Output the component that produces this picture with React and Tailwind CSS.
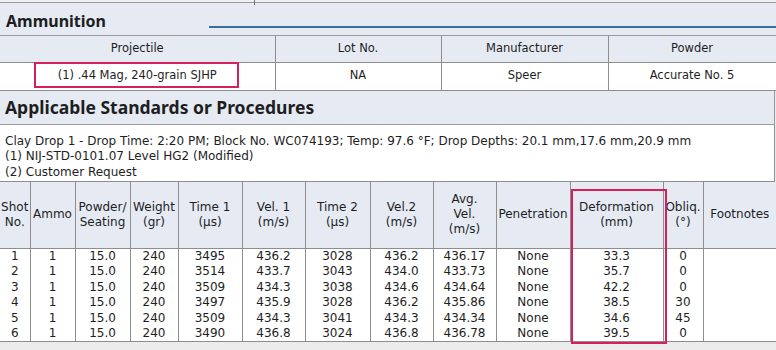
const ammo = [
  { head: "Projectile", w: "w-[275px]" },
  { head: "Lot No.", w: "w-[166px]" },
  { head: "Manufacturer", w: "w-[167px]" },
  { head: "Powder", w: "w-[168px]" },
];

const cols = [30, 45, 55, 48, 64, 63, 65, 63, 63, 74, 93, 40, 73];

const heads = [
  ["Shot", "No."],
  ["Ammo"],
  ["Powder/", "Seating"],
  ["Weight", "(gr)"],
  ["Time 1", "(µs)"],
  ["Vel. 1", "(m/s)"],
  ["Time 2", "(µs)"],
  ["Vel.2", "(m/s)"],
  ["Avg.", "Vel.", "(m/s)"],
  ["Penetration"],
  ["Deformation", "(mm)"],
  ["Obliq.", "(°)"],
  ["Footnotes"],
];

const rows = [
  ["1", "1", "15.0", "240", "3495", "436.2", "3028", "436.2", "436.17", "None", "33.3", "0", ""],
  ["2", "1", "15.0", "240", "3514", "433.7", "3043", "434.0", "433.73", "None", "35.7", "0", ""],
  ["3", "1", "15.0", "240", "3509", "434.3", "3038", "434.6", "434.64", "None", "42.2", "0", ""],
  ["4", "1", "15.0", "240", "3497", "435.9", "3028", "436.2", "435.86", "None", "38.5", "30", ""],
  ["5", "1", "15.0", "240", "3509", "434.3", "3041", "434.3", "434.34", "None", "34.6", "45", ""],
  ["6", "1", "15.0", "240", "3490", "436.8", "3024", "436.8", "436.78", "None", "39.5", "0", ""],
];

export default function App() {
  return (
    <div className="w-[776px] h-[350px] overflow-hidden bg-[#e5eaf3] text-[#1e1e1e] font-['DejaVu_Sans',sans-serif]">
      {/* top edge */}
      <div className="relative h-[3px] bg-[#eef0f3] border-b border-[#9a9a9a]">
        <div className="absolute left-[254px] top-0 w-px h-[5px] bg-[#777]" />
      </div>

      {/* Ammunition title */}
      <div className="h-[33px] flex border-b border-[#9a9a9a]">
        <div className="pl-[6px] pt-[9px] w-[209px] text-[16px] font-bold leading-[18px] font-['Noto_Sans',sans-serif]">
          Ammunition
        </div>
        <div className="flex-1 h-[2px] bg-[#3a6e9c] mt-[23px]" />
      </div>

      {/* Ammunition table */}
      <table className="table-fixed border-collapse w-[775px] text-[11.5px]">
        <thead>
          <tr className="h-[26px]">
            {ammo.map((c, i) => (
              <th
                key={c.head}
                className={`${c.w} font-normal border-b border-[#8e8e8e] ${i > 0 ? "border-l" : ""} ${i === 3 ? "border-r" : ""}`}
              >
                {c.head}
              </th>
            ))}
          </tr>
        </thead>
        <tbody>
          <tr className="h-[28px] bg-white">
            <td className="relative text-center border-b border-[#8e8e8e]">
              (1) .44 Mag, 240-grain SJHP
              <div className="absolute left-[34px] right-[36px] top-[-1px] bottom-[2px] border-2 border-[#d81e5b]" />
            </td>
            <td className="text-center border-b border-l border-[#8e8e8e]">NA</td>
            <td className="text-center border-b border-l border-[#8e8e8e]">Speer</td>
            <td className="text-center border-b border-l border-r border-[#8e8e8e]">Accurate No. 5</td>
          </tr>
        </tbody>
      </table>

      {/* Applicable standards */}
      <div className="h-[34px] w-[775px] flex items-center pl-[5px] text-[17.5px] font-bold border-b border-r border-[#9a9a9a] font-['Noto_Sans',sans-serif]">
        Applicable Standards or Procedures
      </div>
      <div className="h-[57px] w-[775px] bg-white border-r border-b border-[#8e8e8e] pl-[5px] pt-[9px] text-[12px] leading-[15.5px] whitespace-nowrap">
        <div>Clay Drop 1 - Drop Time: 2:20 PM; Block No. WC074193; Temp: 97.6 °F; Drop Depths: 20.1 mm,17.6 mm,20.9 mm</div>
        <div>(1) NIJ-STD-0101.07 Level HG2 (Modified)</div>
        <div>(2) Customer Request</div>
      </div>

      {/* Shot data */}
      <div className="relative">
        <table className="table-fixed border-collapse w-[776px] text-[12px] leading-[15px]">
          <colgroup>
            {cols.map((w, i) => (
              <col key={i} style={{ width: w }} />
            ))}
          </colgroup>
          <thead>
            <tr className="h-[67px]">
              {heads.map((h, i) => (
                <th
                  key={i}
                  className={`font-normal px-0 overflow-hidden whitespace-nowrap border-b border-[#8e8e8e] ${i > 0 ? "border-l" : ""}`}
                >
                  {h.map((l) => (
                    <div key={l}>{l}</div>
                  ))}
                </th>
              ))}
            </tr>
          </thead>
          <tbody className="bg-white">
            {rows.map((r, ri) => (
              <tr key={ri} className="h-[15.5px]">
                {r.map((v, ci) => (
                  <td
                    key={ci}
                    className={`text-center p-0 border-[#8e8e8e] ${ci > 0 ? "border-l" : ""} ${ri === rows.length - 1 ? "border-b" : ""}`}
                  >
                    {v}
                  </td>
                ))}
              </tr>
            ))}
          </tbody>
        </table>
        <div className="absolute left-[571px] top-[7px] w-[96px] h-[155px] border-2 border-[#d81e5b]" />
      </div>
      <div className="h-[10px] bg-[#ececec]" />
    </div>
  );
}
